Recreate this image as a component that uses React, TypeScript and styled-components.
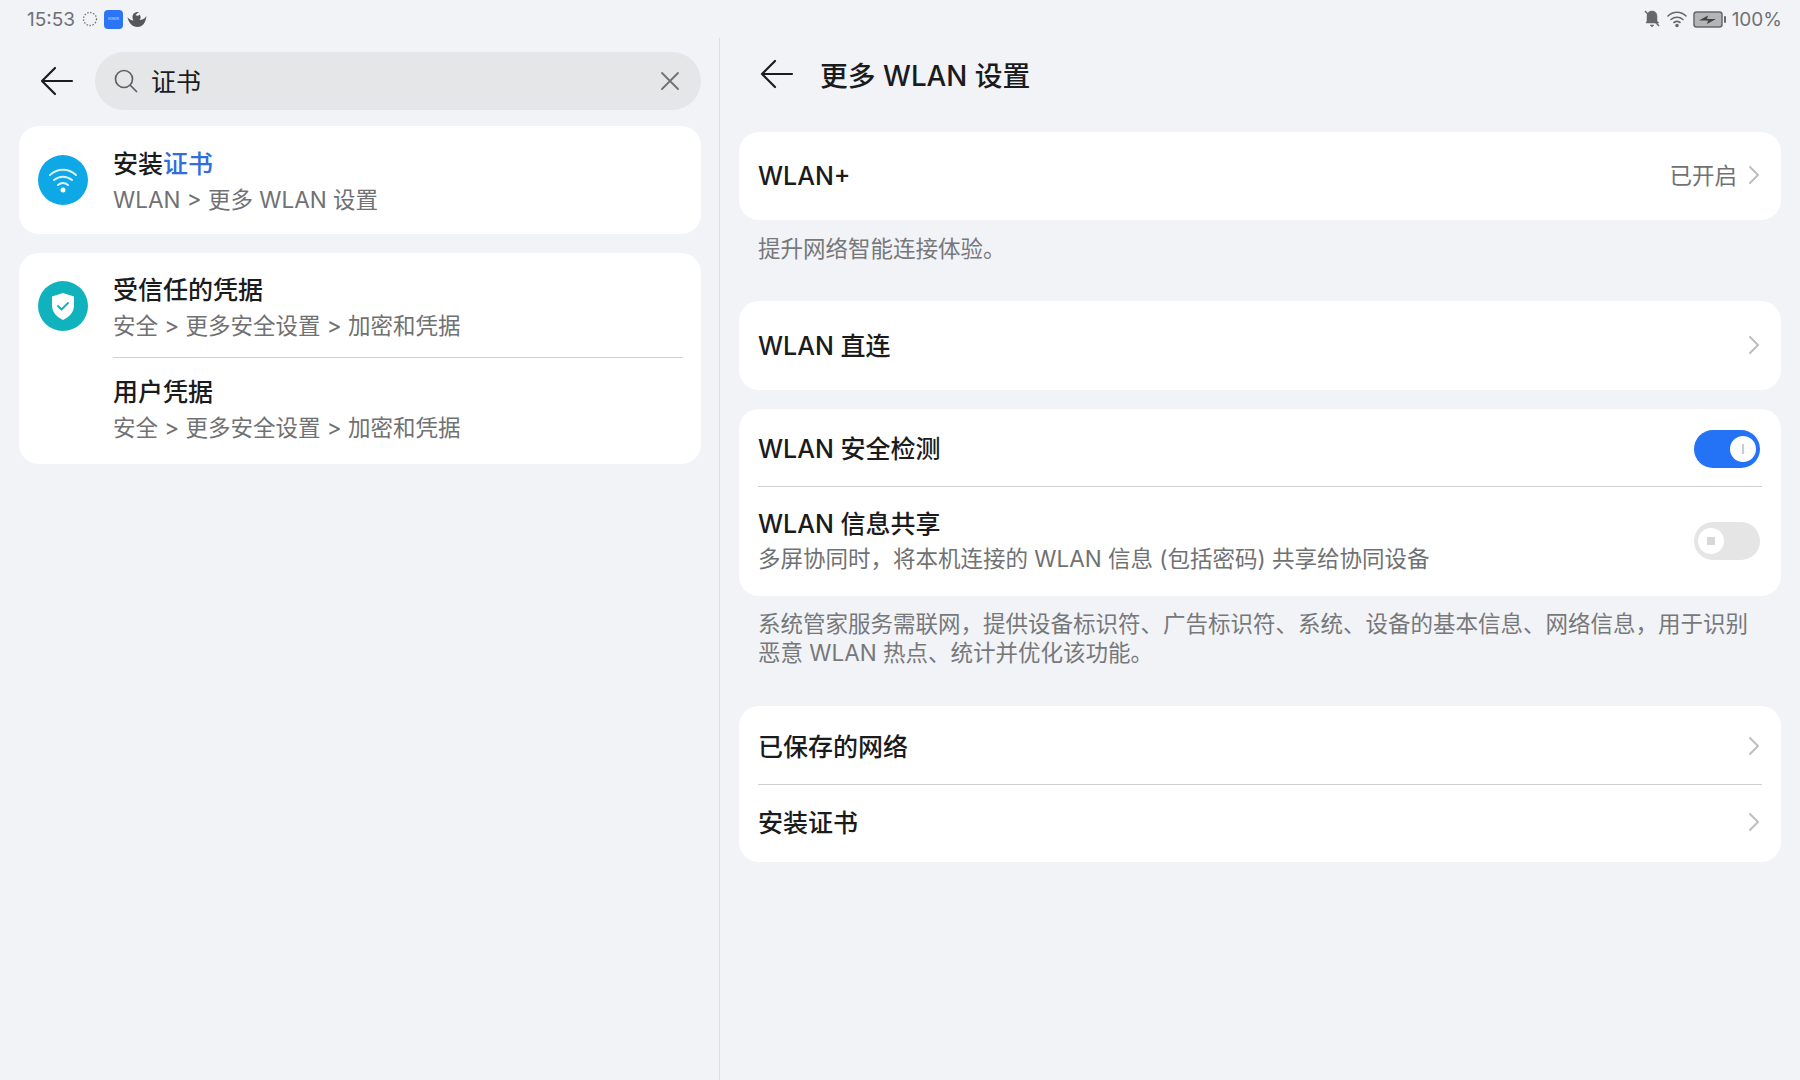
import styled, { createGlobalStyle } from "styled-components";

const GlobalStyle = createGlobalStyle`
  html, body { margin: 0; padding: 0; background: #f1f3f7; }
  * { box-sizing: border-box; }
  body { font-family: "Inter", "Noto Sans CJK SC", sans-serif; }
`;

const Screen = styled.div`
  width: 1800px;
  height: 1080px;
  background: #f1f3f7;
  overflow: hidden;
  display: flex;
  flex-direction: column;
`;
const StatusBar = styled.div`
  height: 38px;
  padding: 0 18px 0 27px;
  display: flex;
  align-items: center;
  justify-content: space-between;
  color: #6f7173;
  font-size: 19px;
`;
const StatusGroup = styled.div`
  display: flex;
  align-items: center;
  gap: 6px;
`;
const Clock = styled.span`
  margin-right: 1px;
`;
const AppBadge = styled.div`
  width: 19px;
  height: 19px;
  margin-right: -2px;
  border-radius: 4px;
  background: #2a74f5;
  color: #dbe8ff;
  font-size: 3px;
  display: flex;
  align-items: center;
  justify-content: center;
`;
const Panes = styled.div`
  flex: 1;
  display: flex;
`;
const LeftPane = styled.div`
  width: 720px;
  border-right: 1px solid #dcdee1;
  padding: 14px 18px 0 19px;
`;
const RightPane = styled.div`
  flex: 1;
  padding: 0 19px;
`;
const SearchRow = styled.div`
  display: flex;
  align-items: center;
  gap: 20px;
  margin-bottom: 16px;
`;
const BackSlot = styled.div`
  width: 36px;
  margin-left: 20px;
  display: flex;
  justify-content: center;
  flex-shrink: 0;
`;
const SearchBox = styled.div`
  flex: 1;
  height: 58px;
  border-radius: 29px;
  background: #e5e6e8;
  padding: 0 21px 0 18px;
  display: flex;
  align-items: center;
  color: #1b1c1e;
  font-size: 25px;
`;
const SearchText = styled.span`
  flex: 1;
  margin: -2px 0 0 12px;
`;
const Card = styled.div<{ $gap?: number }>`
  background: #fff;
  border-radius: 20px;
  margin-bottom: ${(p) => p.$gap ?? 19}px;
`;
const ResultRow = styled.div`
  display: flex;
  padding: 0 18px 0 19px;
`;
const IconSlot = styled.div`
  width: 75px;
  flex-shrink: 0;
  display: flex;
  align-items: center;
`;
const ResultText = styled.div<{ $h: number; $line?: boolean; $pt?: number; $pb?: number }>`
  flex: 1;
  height: ${(p) => p.$h}px;
  padding: ${(p) => p.$pt ?? 0}px 0 ${(p) => p.$pb ?? 0}px;
  display: flex;
  flex-direction: column;
  justify-content: center;
  border-bottom: ${(p) => (p.$line ? "1px solid #cfd0d2" : "none")};
`;
const ResultTitle = styled.div`
  font-size: 25px;
  line-height: 36px;
  font-weight: 500;
  color: #1a1b1d;
`;
const Hit = styled.span`
  color: #2f6fdc;
`;
const ResultSub = styled.div`
  font-size: 22.5px;
  line-height: 35px;
  color: #707173;
`;
const PageHeader = styled.div`
  height: 94px;
  padding: 0 0 22px 21px;
  display: flex;
  align-items: center;
`;
const PageTitle = styled.div`
  margin-left: 26px;
  font-size: 27.8px;
  font-weight: 500;
  color: #1a1b1d;
`;
const SettingRow = styled.div<{ $h: number; $line?: boolean; $pt?: number; $pb?: number }>`
  height: ${(p) => p.$h}px;
  margin: 0 19px;
  padding: ${(p) => p.$pt ?? 0}px 2px ${(p) => p.$pb ?? 0}px 0;
  display: flex;
  align-items: center;
  justify-content: space-between;
  border-bottom: ${(p) => (p.$line ? "1px solid #cfd0d2" : "none")};
`;
const RowLabel = styled.div`
  margin-top: 2px;
  font-size: 25px;
  font-weight: 500;
  color: #1a1b1d;
  line-height: 36px;
`;
const RowSub = styled.div`
  font-size: 22.5px;
  line-height: 34px;
  color: #707173;
`;
const RowRight = styled.div`
  display: flex;
  align-items: center;
  gap: 11px;
  font-size: 22.5px;
  color: #707173;
`;
const RowValue = styled.span`
  margin-top: -2px;
`;
const Caption = styled.div<{ $h: number; $pt: number; $lh?: number }>`
  height: ${(p) => p.$h}px;
  padding: ${(p) => p.$pt}px 19px 0;
  font-size: 22.5px;
  line-height: ${(p) => p.$lh ?? 30}px;
  color: #77787a;
`;
const Toggle = styled.div<{ $on?: boolean }>`
  width: 66px;
  height: 38px;
  margin-top: 2px;
  border-radius: 19px;
  background: ${(p) => (p.$on ? "#2472f6" : "#e5e5e5")};
  padding: 3px;
  display: flex;
  justify-content: ${(p) => (p.$on ? "flex-end" : "flex-start")};
`;
const Knob = styled.div`
  width: 26px;
  height: 26px;
  margin: 3px 1px;
  border-radius: 50%;
  background: #fff;
  display: flex;
  align-items: center;
  justify-content: center;
`;
const KnobLine = styled.div`
  width: 2px;
  height: 10px;
  background: #c9ccd2;
`;
const KnobDot = styled.div`
  width: 8px;
  height: 8px;
  background: #d8d8d8;
`;

const BackArrow = () => (
  <svg width="34" height="30" viewBox="0 0 34 30" fill="none" stroke="#1b1c1e" strokeWidth="2.2" strokeLinecap="round" strokeLinejoin="round">
    <path d="M32 15H2M15 2 2 15l13 13" />
  </svg>
);
const Chevron = () => (
  <svg width="12" height="20" viewBox="0 0 12 20" fill="none" stroke="#bdbec0" strokeWidth="2" strokeLinecap="round" strokeLinejoin="round">
    <path d="M2 2l8 8-8 8" />
  </svg>
);
const WifiCircle = () => (
  <svg width="50" height="50" viewBox="0 0 50 50">
    <circle cx="25" cy="25" r="25" fill="#0fa8e6" />
    <g fill="none" stroke="#fff" strokeLinecap="round" strokeWidth="2" opacity="0.85">
      <path d="M12 20c8-7 18-7 26 0" />
      <path d="M16 25c5.500-4.500 12.500-4.500 18 0" />
      <path d="M20 30c3-2.500 7-2.500 10 0" />
    </g>
    <circle cx="25" cy="35" r="2.500" fill="#fff" />
  </svg>
);
const ShieldCircle = () => (
  <svg width="50" height="50" viewBox="0 0 50 50">
    <circle cx="25" cy="25" r="25" fill="#10b3bd" />
    <path d="M25 12l11 3.500v9c0 7-5 11.500-11 14.500-6-3-11-7.500-11-14.500v-9z" fill="#fff" />
    <path d="M20 25l3.500 3.500 6.500-6.500" fill="none" stroke="#10b3bd" strokeWidth="1.800" strokeLinecap="round" strokeLinejoin="round" />
  </svg>
);

function App() {
  return (
    <Screen>
      <GlobalStyle />
      <StatusBar>
        <StatusGroup>
          <Clock>15:53</Clock>
          <svg width="16" height="16" viewBox="0 0 16 16" fill="none" stroke="#77787a" strokeWidth="1.300" strokeDasharray="1.500 1.500">
            <circle cx="8" cy="8" r="6.500" />
          </svg>
          <AppBadge>HONOR</AppBadge>
          <svg width="20" height="17" viewBox="0 0 20 17" fill="#55575a">
            <path d="M0.500 6c1 6 5 10 10 10s8-4 9-11c-2 3-5 4-7 4 1.500-1.500 1.500-4 0-5.500-1 1.500-3 1.500-4 0.500 1-1 2.500-2.500 4-3-4-0.500-7 1.500-7 5 0 1 0.300 2.500 1 3.500-2.500 0-4.500-1.500-6-3.500z" />
          </svg>
        </StatusGroup>
        <StatusGroup>
          <svg width="18" height="20" viewBox="0 0 18 20" fill="#66686a" stroke="#66686a">
            <path d="M9 2c3 0 5 2 5 5v5l2 2H3l1-2V7c0-3 2-5 5-5zM7 16h4l-2 2z" strokeWidth="0.5" />
            <path d="M2 2l14 15" strokeWidth="1.500" />
          </svg>
          <svg width="20" height="18" viewBox="0 0 20 18" fill="none" stroke="#66686a" strokeWidth="1.600" strokeLinecap="round">
            <path d="M1 6c5-5 13-5 18 0M4 9.500c3.500-3 8.500-3 12 0M7 12.500c2-1.500 4-1.500 6 0" />
            <circle cx="10" cy="15.500" r="1" fill="#66686a" />
          </svg>
          <svg width="33" height="17" viewBox="0 0 33 17">
            <rect x="1" y="1" width="28" height="15" rx="2.500" fill="#b4b5b6" stroke="#66686a" strokeWidth="1.500" />
            <path d="M6 9.500l9-5-1 3.500h9l-9 5 1-3.500z" fill="#444" />
            <rect x="31" y="5" width="2" height="7" rx="1" fill="#66686a" />
          </svg>
          <span>100%</span>
        </StatusGroup>
      </StatusBar>
      <Panes>
        <LeftPane>
          <SearchRow>
            <BackSlot>
              <BackArrow />
            </BackSlot>
            <SearchBox>
              <svg width="26" height="26" viewBox="0 0 26 26" fill="none" stroke="#5f6063" strokeWidth="1.700" strokeLinecap="round">
                <circle cx="11" cy="11" r="8.500" />
                <path d="M17.500 17.500l6 6" />
              </svg>
              <SearchText>证书</SearchText>
              <svg width="20" height="20" viewBox="0 0 20 20" fill="none" stroke="#6f7173" strokeWidth="1.800" strokeLinecap="round">
                <path d="M2 2l16 16M18 2 2 18" />
              </svg>
            </SearchBox>
          </SearchRow>
          <Card>
            <ResultRow>
              <IconSlot>
                <WifiCircle />
              </IconSlot>
              <ResultText $h={108} $pt={2}>
                <ResultTitle>
                  安装<Hit>证书</Hit>
                </ResultTitle>
                <ResultSub>WLAN &gt; 更多 WLAN 设置</ResultSub>
              </ResultText>
            </ResultRow>
          </Card>
          <Card>
            <ResultRow>
              <IconSlot>
                <ShieldCircle />
              </IconSlot>
              <ResultText $h={105} $line $pt={4}>
                <ResultTitle>受信任的凭据</ResultTitle>
                <ResultSub>安全 &gt; 更多安全设置 &gt; 加密和凭据</ResultSub>
              </ResultText>
            </ResultRow>
            <ResultRow>
              <IconSlot />
              <ResultText $h={106} $pb={3}>
                <ResultTitle>用户凭据</ResultTitle>
                <ResultSub>安全 &gt; 更多安全设置 &gt; 加密和凭据</ResultSub>
              </ResultText>
            </ResultRow>
          </Card>
        </LeftPane>
        <RightPane>
          <PageHeader>
            <BackArrow />
            <PageTitle>更多 WLAN 设置</PageTitle>
          </PageHeader>
          <Card $gap={0}>
            <SettingRow $h={88} $pb={2}>
              <RowLabel>WLAN+</RowLabel>
              <RowRight>
                <RowValue>已开启</RowValue>
                <Chevron />
              </RowRight>
            </SettingRow>
          </Card>
          <Caption $h={81} $pt={14}>提升网络智能连接体验。</Caption>
          <Card>
            <SettingRow $h={89} $pb={2}>
              <RowLabel>WLAN 直连</RowLabel>
              <RowRight>
                <Chevron />
              </RowRight>
            </SettingRow>
          </Card>
          <Card $gap={0}>
            <SettingRow $h={78} $line>
              <RowLabel>WLAN 安全检测</RowLabel>
              <Toggle $on>
                <Knob>
                  <KnobLine />
                </Knob>
              </Toggle>
            </SettingRow>
            <SettingRow $h={109} $pb={3}>
              <div>
                <RowLabel>WLAN 信息共享</RowLabel>
                <RowSub>多屏协同时，将本机连接的 WLAN 信息 (包括密码) 共享给协同设备</RowSub>
              </div>
              <Toggle>
                <Knob>
                  <KnobDot />
                </Knob>
              </Toggle>
            </SettingRow>
          </Card>
          <Caption $h={110} $pt={13} $lh={29}>
            系统管家服务需联网，提供设备标识符、广告标识符、系统、设备的基本信息、网络信息，用于识别
            <br />
            恶意 WLAN 热点、统计并优化该功能。
          </Caption>
          <Card>
            <SettingRow $h={79} $line $pt={2}>
              <RowLabel>已保存的网络</RowLabel>
              <RowRight>
                <Chevron />
              </RowRight>
            </SettingRow>
            <SettingRow $h={77} $pb={4}>
              <RowLabel>安装证书</RowLabel>
              <RowRight>
                <Chevron />
              </RowRight>
            </SettingRow>
          </Card>
        </RightPane>
      </Panes>
    </Screen>
  );
}

export default App;
